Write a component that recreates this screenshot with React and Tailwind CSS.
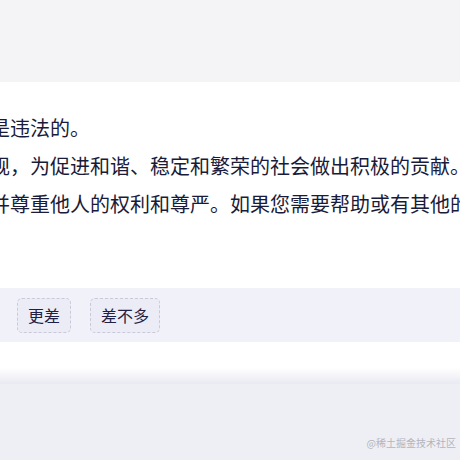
const lines = [
  "是违法的。",
  "规，为促进和谐、稳定和繁荣的社会做出积极的贡献。",
  "并尊重他人的权利和尊严。如果您需要帮助或有其他的问题",
];

const Chip = ({ label }) => (
  <button className="h-[35px] px-[10px] rounded-[5px] border border-dashed border-[#c9c9da] bg-[#ebecf6] text-[16px] text-[#1f2044] leading-none">
    {label}
  </button>
);

export default function App() {
  return (
    <div
      className="w-[460px] h-[460px] overflow-hidden flex flex-col bg-[#eeeff5]"
      style={{ fontFamily: '"Noto Sans CJK SC", "Noto Sans", sans-serif' }}
    >
      <div className="h-[82px] shrink-0 bg-[#f4f4f6]" />

      {/* message body */}
      <div className="h-[206px] shrink-0 bg-white overflow-hidden pt-[27px]">
        <div className="ml-[-10px] text-[20px] leading-[38px] text-[#1a1b38] whitespace-nowrap">
          {lines.map((l, i) => (
            <p key={i}>{l}</p>
          ))}
        </div>
      </div>

      {/* feedback options */}
      <div className="h-[54px] shrink-0 bg-[#f0f1f9] flex items-center gap-[19px] pl-[17px]">
        <Chip label="更差" />
        <Chip label="差不多" />
      </div>

      <div className="h-[26px] shrink-0 bg-white" />
      <div className="h-[16px] shrink-0 bg-gradient-to-b from-white via-[#f4f4f9] to-[#e9eaf2]" />

      <div className="flex-1 flex items-end justify-end pr-[4px] pb-[10px]">
        <span className="text-[10px] text-[#b3b4bd]">@稀土掘金技术社区</span>
      </div>
    </div>
  );
}
